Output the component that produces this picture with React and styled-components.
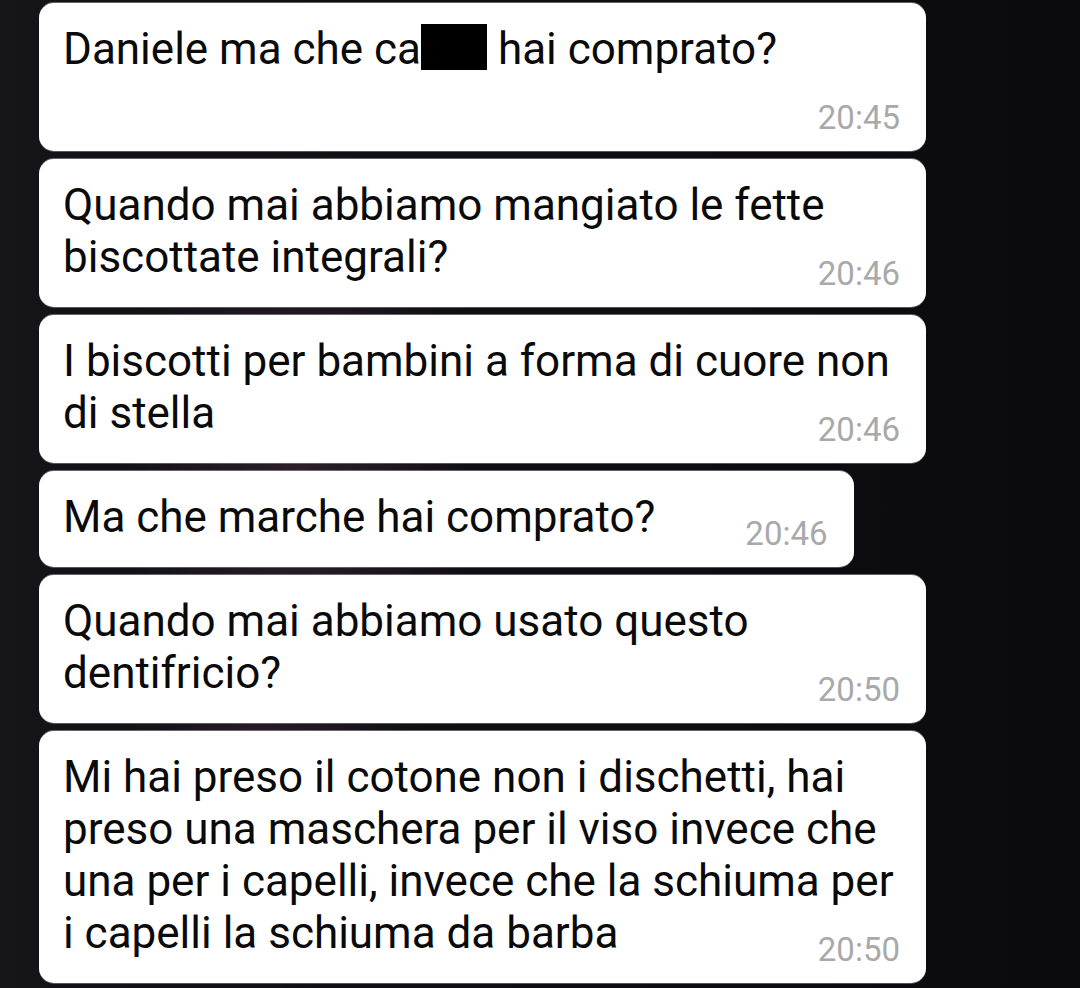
import React from "react";
import styled, { createGlobalStyle } from "styled-components";

const GlobalStyle = createGlobalStyle`
  html, body {
    margin: 0;
    padding: 0;
  }

  body {
    width: 1080px;
    height: 988px;
    overflow: hidden;
    font-family: Roboto, "Noto Sans", "Liberation Sans", sans-serif;
    background-color: #0c0c0f;
    background-image:
      radial-gradient(ellipse 260px 500px at 300px 480px, rgba(120, 70, 110, 0.28), transparent 70%),
      radial-gradient(ellipse 200px 300px at 250px 800px, rgba(110, 60, 100, 0.22), transparent 70%),
      linear-gradient(90deg, #16151a 0px, #131217 60px, #0f0e12 420px, #0b0b0e 1080px);
  }
`;

const Chat = styled.div`
  display: flex;
  flex-direction: column;
  align-items: flex-start;
  gap: 8px;
  padding: 3px 0 0 39px;
`;

const Bubble = styled.div`
  display: flow-root;
  box-sizing: border-box;
  max-width: 887px;
  padding: 20px 26px 21px 24px;
  background: #ffffff;
  border-radius: 15px;
  box-shadow: 0 -1px 0 rgba(170, 170, 175, 0.55), 0 1px 0 rgba(170, 170, 175, 0.45);
  color: #0a0a0a;
  font-size: 44px;
  line-height: 52px;
`;

const Censor = styled.span`
  display: inline-block;
  width: 66px;
  height: 46px;
  vertical-align: -6px;
  background: #000;
`;

const Time = styled.span`
  float: right;
  margin: 31px 0 0 90px;
  font-size: 33px;
  line-height: 24px;
  color: #a9a9a9;
`;

const messages = [
  {
    text: (
      <>
        Daniele ma che ca<Censor /> hai comprato?
      </>
    ),
    time: "20:45",
  },
  { text: "Quando mai abbiamo mangiato le fette biscottate integrali?", time: "20:46" },
  { text: "I biscotti per bambini a forma di cuore non di stella", time: "20:46" },
  { text: "Ma che marche hai comprato?", time: "20:46" },
  { text: "Quando mai abbiamo usato questo dentifricio?", time: "20:50" },
  {
    text:
      "Mi hai preso il cotone non i dischetti, hai preso una maschera per il viso invece che una per i capelli, invece che la schiuma per i capelli la schiuma da barba",
    time: "20:50",
  },
];

export default function App() {
  return (
    <>
      <GlobalStyle />
      <Chat>
        {messages.map((m, i) => (
          <Bubble key={i}>
            {m.text}
            <Time>{m.time}</Time>
          </Bubble>
        ))}
      </Chat>
    </>
  );
}
